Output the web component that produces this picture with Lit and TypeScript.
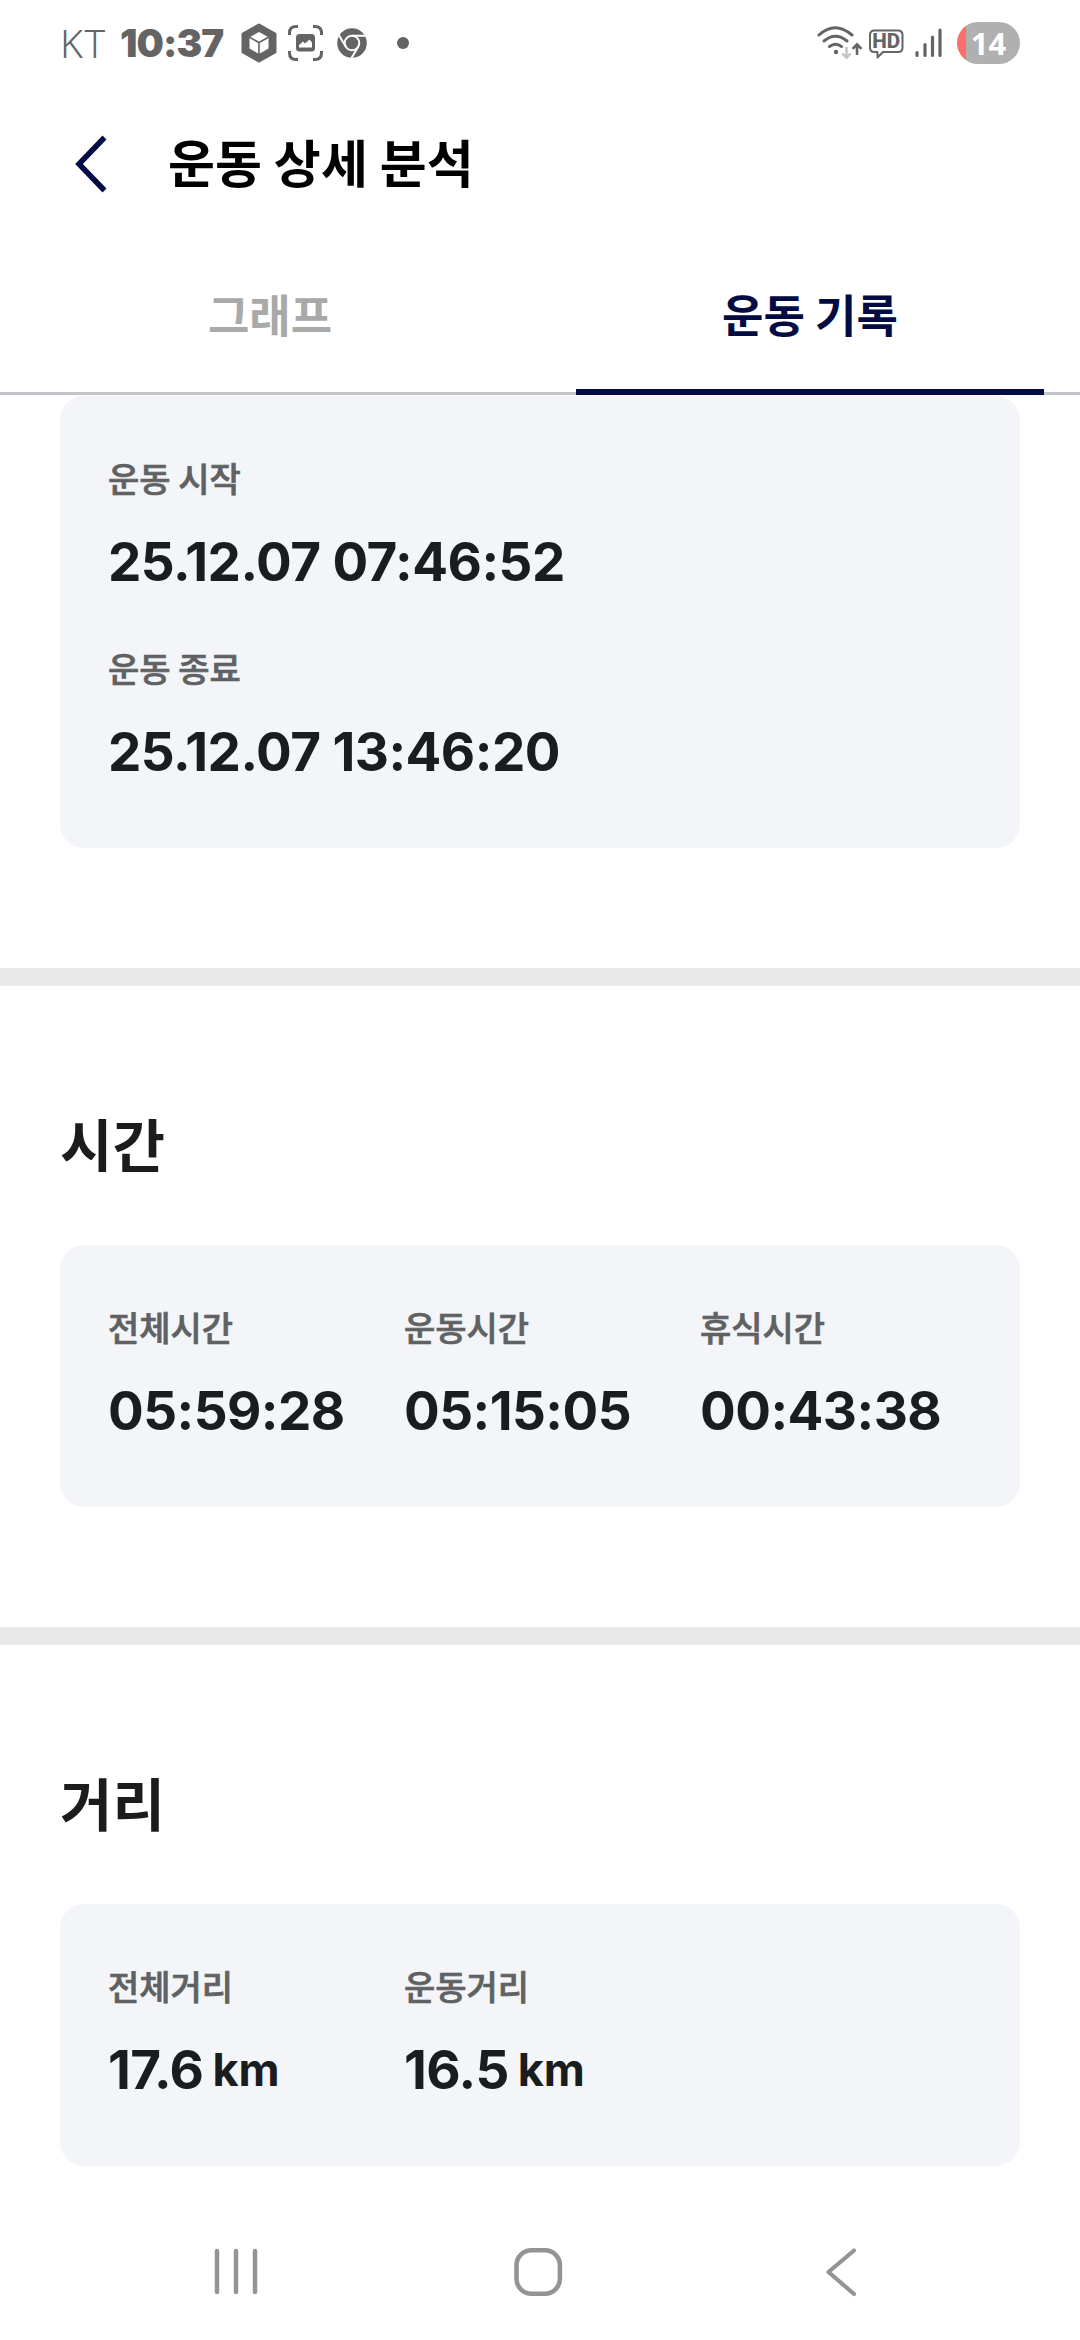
import { LitElement, html, css } from "lit";
import { customElement, property } from "lit/decorators.js";

interface Metric {
  label: string;
  value: string;
  unit?: string;
}

@customElement("status-bar")
class StatusBar extends LitElement {
  static styles = css`
    :host {
      display: flex;
      align-items: center;
      height: 86px;
      padding: 0 60px;
      box-sizing: border-box;
      color: #646464;
    }
    svg {
      display: block;
      flex: none;
    }
    .carrier {
      width: 60px;
      font: 300 39px/84px "Noto Sans", sans-serif;
      letter-spacing: 1.5px;
    }
    .clock {
      width: 121px;
      font: 900 38.5px/86px Inter, sans-serif;
      letter-spacing: -0.9px;
    }
    .scan {
      margin-left: 11px;
    }
    .chrome {
      margin-left: 14px;
    }
    .more {
      width: 12px;
      height: 12px;
      margin-left: 30px;
      border-radius: 50%;
      background: #646464;
    }
    .spacer {
      flex: 1;
    }
    .wifi {
      margin-right: 5px;
    }
    .signal {
      margin-left: 11px;
    }
    .battery {
      display: flex;
      align-items: center;
      justify-content: center;
      width: 63px;
      height: 42px;
      margin-left: 15px;
      border-radius: 21px;
      background: linear-gradient(90deg, #fa6f6c 9px, #b0b0b0 9px);
      color: #fff;
      font: 700 31px/42px "Noto Sans", sans-serif;
    }
  `;

  render() {
    return html`
      <span class="carrier">KT</span>
      <span class="clock">10:37</span>
      <svg width="36" height="40" viewBox="0 0 36 40">
        <path fill="#646464" stroke="#646464" stroke-width="3" stroke-linejoin="round"
          d="M18 2 34 11V29L18 38 2 29V11Z" />
        <path fill="#fff" d="M18 9 27.5 14.3V25.5L18 31 8.500 25.500V14.300Z" />
        <path fill="none" stroke="#646464" stroke-width="1.6" d="M8.500 14.300 18 19.500 27.500 14.300M18 19.500V31" />
      </svg>
      <svg class="scan" width="35" height="36" viewBox="0 0 35 36">
        <path fill="none" stroke="#646464" stroke-width="3"
          d="M1.500 10V8Q1.500 1.500 8 1.500H10M25 1.500H27Q33.500 1.500 33.500 8V10M33.500 26V28Q33.500 34.500 27 34.500H25M10 34.500H8Q1.500 34.500 1.500 28V26" />
        <rect x="8" y="9" width="19" height="17.500" rx="3.500" fill="#646464" />
        <path fill="#fff" d="M11 22.500V20L15 16.500 17 18.500 21.500 14.500 24 17.500V22.500Z" />
      </svg>
      <svg class="chrome" width="30" height="30" viewBox="0 0 30 30">
        <circle cx="15" cy="15" r="14.800" fill="#646464" />
        <circle cx="15" cy="15" r="7.300" fill="none" stroke="#fff" stroke-width="2" />
        <path fill="none" stroke="#fff" stroke-width="2"
          d="M15 7.700H29M8.700 18.600 1.800 7M21.300 18.600 14.500 30" />
      </svg>
      <span class="more"></span>
      <span class="spacer"></span>
      <svg class="wifi" width="46" height="36" viewBox="0 0 46 36">
        <g fill="none" stroke="#646464" stroke-width="3" stroke-linecap="round">
          <path d="M2 10Q18 -4.500 35 10" />
          <path d="M7 16Q18.500 6.500 30 16" />
          <path d="M12.500 21.500Q18.500 17 24.500 21.500" />
        </g>
        <circle cx="19" cy="27" r="2.200" fill="#646464" />
        <path fill="none" stroke="#c4c4c4" stroke-width="2.400" d="M29.500 22V32.500M25.300 28.500 29.500 32.700 33.700 28.500" />
        <path fill="none" stroke="#646464" stroke-width="2.600" d="M40 30V19.500M35.600 23.800 40 19.300 44.400 23.800" />
      </svg>
      <svg width="36" height="32" viewBox="0 0 36 32">
        <path fill="none" stroke="#646464" stroke-width="2" stroke-linejoin="round"
          d="M6.500 3.500H30Q34.500 3.500 34.500 8V20.500Q34.500 25 30 25H15L9.500 30.500V25H6.500Q2 25 2 20.500V8Q2 3.500 6.500 3.500Z" />
        <text x="18.200" y="21.300" text-anchor="middle" textLength="28" lengthAdjust="spacingAndGlyphs"
          fill="#646464" font-family="Roboto, sans-serif" font-size="20" font-weight="800">HD</text>
      </svg>
      <svg class="signal" width="27" height="30" viewBox="0 0 27 30">
        <path fill="none" stroke="#646464" stroke-width="3.200" stroke-linecap="round"
          d="M2 24.500V27.500M10 16.500V27.500M17.500 9V27.500M25 2V27.500" />
      </svg>
      <span class="battery">14</span>
    `;
  }
}

@customElement("app-header")
class AppHeader extends LitElement {
  static styles = css`
    :host {
      display: flex;
      align-items: center;
      height: 156px;
      padding-left: 74px;
      box-sizing: border-box;
    }
    svg {
      display: block;
      margin-right: 60px;
    }
    h1 {
      margin: 0;
      padding-bottom: 6px;
      font: 700 51px/80px "Noto Sans CJK KR", sans-serif;
      letter-spacing: 0.15px;
      color: #000;
      white-space: nowrap;
    }
  `;

  render() {
    return html`
      <svg width="34" height="60" viewBox="0 0 34 60">
        <path fill="none" stroke="#020b42" stroke-width="5.500" d="M30.500 3.500 5 30 30.500 56.500" />
      </svg>
      <h1>운동 상세 분석</h1>
    `;
  }
}

@customElement("tab-strip")
class TabStrip extends LitElement {
  static styles = css`
    :host {
      display: grid;
      grid-template-columns: 1fr 1fr;
      height: 153px;
      box-sizing: border-box;
      border-bottom: 3px solid #c4c4cb;
      font: 700 45px/143px "Noto Sans CJK KR", sans-serif;
      text-align: center;
    }
    .tab {
      height: 147px;
      color: #a9a9a9;
    }
    .tab.active {
      margin: 0 36px;
      border-bottom: 6px solid #020b42;
      color: #020b42;
    }
  `;

  render() {
    return html`
      <div class="tab">그래프</div>
      <div class="tab active">운동 기록</div>
    `;
  }
}

@customElement("metric-card")
class MetricCard extends LitElement {
  @property({ attribute: false }) metrics: Metric[] = [];
  @property({ type: Boolean, reflect: true }) stacked = false;

  static styles = css`
    :host {
      display: grid;
      grid-template-columns: repeat(3, 1fr);
      column-gap: 24px;
      row-gap: 26px;
      padding: 54px 48px 44px;
      border-radius: 24px;
      background: #f3f5f9;
    }
    :host([stacked]) {
      grid-template-columns: 1fr;
    }
    .label {
      height: 59px;
      font: 500 34px/56px "Noto Sans CJK KR", sans-serif;
      color: #606163;
      -webkit-text-stroke: 0.7px #606163;
    }
    .value {
      display: flex;
      align-items: center;
      height: 105px;
      gap: 9px;
      font: 700 53px/108px Inter, sans-serif;
      letter-spacing: -0.55px;
      color: #1b1c1d;
      white-space: nowrap;
    }
    .unit {
      font-size: 45px;
      letter-spacing: 0;
    }
  `;

  render() {
    return this.metrics.map(
      (m) => html`
        <div class="metric">
          <div class="label">${m.label}</div>
          <div class="value">
            <span>${m.value}</span>${m.unit ? html`<span class="unit">${m.unit}</span>` : null}
          </div>
        </div>
      `,
    );
  }
}

@customElement("nav-bar")
class NavBar extends LitElement {
  static styles = css`
    :host {
      display: grid;
      grid-template-columns: 302px 312px 34px;
      align-items: center;
      height: 136px;
      padding-left: 212px;
      box-sizing: border-box;
    }
    svg {
      display: block;
    }
  `;

  render() {
    const stroke = "#949494";
    return html`
      <svg width="48" height="50" viewBox="0 0 48 50">
        <path fill="none" stroke=${stroke} stroke-width="4.500" stroke-linecap="round"
          d="M5 4V45M24 4V45M43 4V45" />
      </svg>
      <svg width="50" height="50" viewBox="0 0 50 50">
        <rect x="2.500" y="3.300" width="43.400" height="43.400" rx="15" fill="none" stroke=${stroke} stroke-width="4.600" />
      </svg>
      <svg width="34" height="50" viewBox="0 0 34 50">
        <path fill="none" stroke=${stroke} stroke-width="4.200" stroke-linecap="round" stroke-linejoin="round"
          d="M28 3.500 2.500 25 28 47" />
      </svg>
    `;
  }
}

@customElement("app-root")
class AppRoot extends LitElement {
  static styles = css`
    :host {
      display: flex;
      flex-direction: column;
      width: 1080px;
      height: 2340px;
      overflow: hidden;
      background: #fff;
    }
    .content {
      flex: 1;
      min-height: 0;
      padding-top: 1px;
      overflow: hidden;
    }
    section {
      padding: 0 60px;
    }
    .period,
    .time {
      padding-bottom: 120px;
    }
    .divider {
      height: 18px;
      background: #e9e9e9;
    }
    h2 {
      height: 80px;
      margin: 0;
      padding: 116px 0 63px;
      font: 700 57px/80px "Noto Sans CJK KR", sans-serif;
      color: #1b1c1d;
    }
  `;

  private period: Metric[] = [
    { label: "운동 시작", value: "25.12.07 07:46:52" },
    { label: "운동 종료", value: "25.12.07 13:46:20" },
  ];

  private time: Metric[] = [
    { label: "전체시간", value: "05:59:28" },
    { label: "운동시간", value: "05:15:05" },
    { label: "휴식시간", value: "00:43:38" },
  ];

  private distance: Metric[] = [
    { label: "전체거리", value: "17.6", unit: "km" },
    { label: "운동거리", value: "16.5", unit: "km" },
  ];

  render() {
    return html`
      <status-bar></status-bar>
      <app-header></app-header>
      <tab-strip></tab-strip>
      <div class="content">
        <section class="period">
          <metric-card stacked .metrics=${this.period}></metric-card>
        </section>
        <div class="divider"></div>
        <section class="time">
          <h2>시간</h2>
          <metric-card .metrics=${this.time}></metric-card>
        </section>
        <div class="divider"></div>
        <section>
          <h2>거리</h2>
          <metric-card .metrics=${this.distance}></metric-card>
        </section>
      </div>
      <nav-bar></nav-bar>
    `;
  }
}
